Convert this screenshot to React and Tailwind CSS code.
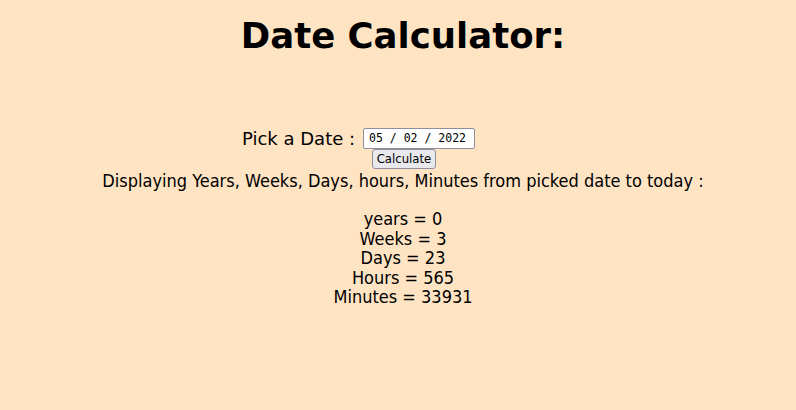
import React from "react";

const results = [
  ["years", 0],
  ["Weeks", 3],
  ["Days", 23],
  ["Hours", 565],
  ["Minutes", 33931],
];

const App = () => {
  return (
    <div className="w-[796px] h-[410px] bg-[#ffe4c4] text-black font-['DejaVu_Sans',sans-serif]">
      <h1 className="pt-[16px] pl-[10px] text-center text-[35.5px] leading-[40px] font-bold">
        Date Calculator:
      </h1>

      <div className="mt-[72px] flex items-center">
        <span className="ml-[242px] text-[18px] leading-[21px]">Pick a Date :</span>
        <div className="ml-[8px] w-[112px] h-[21px] px-[5px] flex items-center border border-[#8f8f9d] rounded-[2px] bg-white font-['DejaVu_Sans_Mono',monospace] text-[11.5px]">
          05 / 02 / 2022
        </div>
      </div>

      <div className="flex justify-center">
        <button className="ml-[12px] w-[64px] h-[20px] border border-[#8f8f9d] rounded-[3px] bg-[#e9e9ed] font-['DejaVu_Sans_Condensed',sans-serif] text-[13px] leading-[16px]">
          Calculate
        </button>
      </div>

      <div className="mt-[2px] pl-[10px] text-center font-['DejaVu_Sans_Condensed',sans-serif] text-[18px] leading-[20px]">
        <p>Displaying Years, Weeks, Days, hours, Minutes from picked date to today :</p>
        <div className="mt-[18px]">
          {results.map(([label, value]) => (
            <p key={label} className="leading-[19.5px]">
              {label} = {value}
            </p>
          ))}
        </div>
      </div>
    </div>
  );
};

export default App;
